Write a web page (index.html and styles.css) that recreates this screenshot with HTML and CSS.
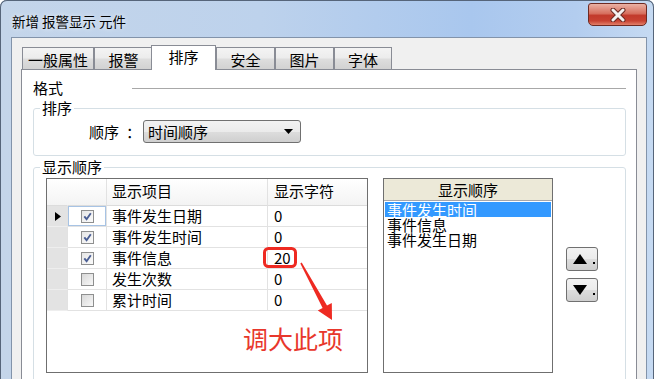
FILE: index.html
```html
<!DOCTYPE html>
<html lang="zh-CN">
<head>
  <meta charset="UTF-8" />
  <title>新增 报警显示 元件</title>
  <link rel="stylesheet" href="styles.css">
</head>
<body>

<div class="window">
  <div class="titlebar">
    <span class="title">新增 报警显示 元件</span>
    <button class="close-btn">
      <svg width="16" height="14" viewBox="0 0 16 14">
        <path d="M3 2 L13 12 M13 2 L3 12" stroke="#6b2a22" stroke-width="5" stroke-linecap="round"/>
        <path d="M3 2 L13 12 M13 2 L3 12" stroke="#f4f1f0" stroke-width="3" stroke-linecap="round"/>
      </svg>
    </button>
  </div>

  <div class="client">
    <div class="tabs">
      <div class="tab tab-1">一般属性</div>
      <div class="tab tab-2">报警</div>
      <div class="tab active">排序</div>
      <div class="tab tab-4">安全</div>
      <div class="tab tab-5">图片</div>
      <div class="tab tab-6">字体</div>
    </div>

    <div class="tab-panel">
      <div class="section-head">
        <span>格式</span>
        <i class="rule"></i>
      </div>

      <fieldset class="group group-sort">
        <legend>排序</legend>
        <div class="field">
          <label>顺序<span class="colon">：</span></label>
          <div class="combo">
            <span>时间顺序</span>
            <svg width="9" height="5" viewBox="0 0 9 5"><polygon points="0,0 9,0 4.5,5" fill="#000"/></svg>
          </div>
        </div>
      </fieldset>

      <fieldset class="group group-order">
        <legend>显示顺序</legend>
        <div class="order-body">

          <div class="grid">
            <div class="grid-row head">
              <div class="cell corner"></div>
              <div class="cell"></div>
              <div class="cell">显示项目</div>
              <div class="cell num">显示字符</div>
            </div>
            <div class="grid-row">
              <div class="cell rowhead"><svg width="6" height="9" viewBox="0 0 6 9"><polygon points="0,0 6,4.5 0,9" fill="#000"/></svg></div>
              <div class="cell chk-cell focused"><span class="chk on"><svg width="11" height="11" viewBox="0 0 11 11"><path d="M2.3 5.4 L4.6 8.2 L8.8 2.3" fill="none" stroke="#4b5f94" stroke-width="1.9"/></svg></span></div>
              <div class="cell">事件发生日期</div>
              <div class="cell num">0</div>
            </div>
            <div class="grid-row">
              <div class="cell rowhead"></div>
              <div class="cell chk-cell"><span class="chk on"><svg width="11" height="11" viewBox="0 0 11 11"><path d="M2.3 5.4 L4.6 8.2 L8.8 2.3" fill="none" stroke="#4b5f94" stroke-width="1.9"/></svg></span></div>
              <div class="cell">事件发生时间</div>
              <div class="cell num">0</div>
            </div>
            <div class="grid-row">
              <div class="cell rowhead"></div>
              <div class="cell chk-cell"><span class="chk on"><svg width="11" height="11" viewBox="0 0 11 11"><path d="M2.3 5.4 L4.6 8.2 L8.8 2.3" fill="none" stroke="#4b5f94" stroke-width="1.9"/></svg></span></div>
              <div class="cell">事件信息</div>
              <div class="cell num">20</div>
            </div>
            <div class="grid-row">
              <div class="cell rowhead"></div>
              <div class="cell chk-cell"><span class="chk"></span></div>
              <div class="cell">发生次数</div>
              <div class="cell num">0</div>
            </div>
            <div class="grid-row">
              <div class="cell rowhead"></div>
              <div class="cell chk-cell"><span class="chk"></span></div>
              <div class="cell">累计时间</div>
              <div class="cell num">0</div>
            </div>
          </div>

          <div class="listbox">
            <div class="list-head">显示顺序</div>
            <ul class="list">
              <li class="selected">事件发生时间</li>
              <li>事件信息</li>
              <li>事件发生日期</li>
            </ul>
          </div>

          <div class="move-btns">
            <button class="move-btn">
              <svg width="30" height="22" viewBox="0 0 30 22"><polygon points="6,16 13,6 20,16" fill="#000"/><rect x="26" y="14" width="2" height="2" fill="#000"/></svg>
            </button>
            <button class="move-btn">
              <svg width="30" height="22" viewBox="0 0 30 22"><polygon points="6,6 20,6 13,16" fill="#000"/><rect x="26" y="14" width="2" height="2" fill="#000"/></svg>
            </button>
          </div>

        </div>
      </fieldset>
    </div>
  </div>

  <!-- red markup drawn on top of the screenshot -->
  <svg class="annot" width="654" height="379" viewBox="0 0 654 379">
    <rect x="264.5" y="248.5" width="31" height="18" rx="4" fill="none" stroke="#ee2a22" stroke-width="3"/>
    <polygon points="301.7,262.6 327,305.6 331.8,303 332,320 317.8,310.6 322.6,308 300.3,263.4" fill="#ee2a22"/>
  </svg>
  <div class="annot-text">调大此项</div>
</div>

</body>
</html>
```

FILE: styles.css
```css
html {
  background: #fff;
}
body {
  margin: 0;
  font-family: "Noto Sans CJK SC", "Liberation Sans", sans-serif;
  font-size: 15px;
  color: #000;
}

.window {
  position: relative;
  width: 654px;
  height: 379px;
  overflow: hidden;
  border-radius: 7px 7px 0 0;
  background: linear-gradient(to right, #c4d5ea 0%, #bdd2ec 40%, #a9c7ee 72%, #b3cdef 88%, #c6daf2 100%);
  box-shadow: inset 0 1px 0 #56657a, inset 1px 0 0 #56657a, inset -1px 0 0 #56657a;
}

.titlebar {
  height: 37px;
  display: flex;
  justify-content: space-between;
  align-items: flex-start;
  padding: 0 7px 0 12px;
}
.title {
  margin-top: 13px;
  font-size: 13.5px;
  line-height: 16px;
  text-shadow: 0 0 5px rgba(255, 255, 255, 0.9);
}
.close-btn {
  margin-top: 3px;
  width: 59px;
  height: 23px;
  padding: 0;
  display: flex;
  align-items: center;
  justify-content: center;
  border: 1px solid #6e2a22;
  border-radius: 3px 3px 5px 5px;
  background: linear-gradient(#eab1a4 0%, #d7705f 45%, #c23a2b 55%, #c84232 80%, #e2806a 100%);
}

.client {
  margin: 0 7px 0 11px;
  height: 360px;
  background: #f0f0f0;
  border: 1px solid #8293aa;
  border-bottom: none;
}

/* tab strip */
.tabs {
  display: flex;
  align-items: flex-end;
  height: 24px;
  margin-top: 7px;
  padding-left: 10px;
}
.tab {
  box-sizing: border-box;
  height: 22px;
  padding-top: 2px;
  line-height: 19px;
  text-align: center;
  border: 1px solid #898c95;
  border-bottom: none;
  background: linear-gradient(#f4f4f4 0%, #ececec 48%, #dedede 52%, #d2d2d2 100%);
}
.tab-1 { width: 72px; }
.tab-2 { width: 59px; }
.tab-4 { width: 59px; }
.tab-5 { width: 59px; }
.tab-6 { width: 58px; }
.tab.active {
  position: relative;
  z-index: 1;
  width: 65px;
  height: 25px;
  margin-left: -2px;
  margin-bottom: -1px;
  padding-top: 1px;
  line-height: 20px;
  background: #fff;
}

.tab-panel {
  margin: 0 9px;
  height: 320px;
  padding: 9px 10px 0 11px;
  background: #fff;
  border: 1px solid #898c95;
}

.section-head {
  display: flex;
  align-items: center;
  height: 18px;
  line-height: 18px;
}
.section-head .rule {
  flex: 1;
  height: 1px;
  margin-left: 69px;
  background: #a8a8a8;
}

/* group boxes */
.group {
  margin: 2px 0 0;
  padding: 0;
  min-width: 0;
  border: 1px solid #d5dfe5;
  border-radius: 3px;
}
.group legend {
  margin-left: 6px;
  padding: 0 2px;
  line-height: 18px;
}
.group-sort {
  padding-bottom: 12px;
}
.field {
  display: flex;
  align-items: center;
  margin: 3px 0 0 55px;
}
.field label {
  width: 54px;
}
.field .colon {
  margin-left: 7px;
}
.combo {
  box-sizing: border-box;
  width: 158px;
  height: 23px;
  display: flex;
  align-items: center;
  justify-content: space-between;
  padding: 0 7px 0 4px;
  border: 1px solid #707070;
  border-radius: 3px;
  background: linear-gradient(#f2f2f2 0%, #ebebeb 50%, #dddddd 51%, #cfcfcf 100%);
  line-height: 20px;
}

.group-order {
  height: 260px;
}
.order-body {
  display: flex;
  align-items: flex-start;
  margin: 2px 0 0 12px;
}

/* data grid */
.grid {
  box-sizing: border-box;
  width: 322px;
  height: 195px;
  border: 1px solid #6f6f6f;
  background: #fff;
}
.grid-row {
  display: grid;
  grid-template-columns: 21px 39px 161px 99px;
  height: 21px;
}
.grid-row.head {
  height: 27px;
  background: linear-gradient(#ffffff, #f3f3f3);
}
.cell {
  box-sizing: border-box;
  display: flex;
  align-items: center;
  padding-left: 5px;
  border-right: 1px solid #e2e2e2;
  border-bottom: 1px solid #e2e2e2;
  line-height: 20px;
}
.head .cell {
  padding-bottom: 2px;
  border-bottom-color: #dcdcdc;
}
.head .corner {
  border-right-color: transparent;
}
.cell.num {
  padding-left: 6px;
}
.cell.num:last-child {
  border-right: none;
}
.cell.rowhead {
  padding-left: 8px;
  background: #e3e3e3;
  border-bottom-color: #eeeeee;
}
.chk-cell {
  justify-content: center;
  padding-left: 1px;
}
.chk-cell.focused {
  box-shadow: inset 0 0 0 1px #a7c3e4;
}
.chk {
  box-sizing: border-box;
  display: block;
  width: 13px;
  height: 13px;
  border: 1px solid #8e8f8f;
  background: linear-gradient(135deg, #d8d8d8, #f8f8f8);
}
.chk svg {
  display: block;
}
.chk.on {
  background: linear-gradient(135deg, #e6e6e6, #fbfbfb);
}

/* order list */
.listbox {
  box-sizing: border-box;
  width: 170px;
  height: 195px;
  margin-left: 15px;
  border: 1px solid #6f6f6f;
  background: #fff;
}
.list-head {
  height: 22px;
  box-sizing: border-box;
  line-height: 21px;
  text-align: center;
  background: #ece9d8;
  border-bottom: 1px solid #a7a6aa;
}
.list {
  list-style: none;
  margin: 0;
  padding: 1px 1px 0;
}
.list li {
  height: 15px;
  line-height: 15px;
  padding-left: 2px;
}
.list li.selected {
  background: #3399ff;
  color: #fff;
}

.move-btns {
  display: flex;
  flex-direction: column;
  gap: 7px;
  margin-left: 13px;
  padding-top: 69px;
}
.move-btn {
  width: 32px;
  height: 24px;
  padding: 0;
  border: 1px solid #707070;
  border-radius: 3px;
  background: linear-gradient(#f2f2f2 0%, #ebebeb 50%, #dddddd 51%, #cfcfcf 100%);
}
.move-btn svg {
  display: block;
}

/* red markup over the dialog */
.annot {
  position: absolute;
  left: 0;
  top: 0;
  pointer-events: none;
}
.annot-text {
  position: absolute;
  left: 243px;
  top: 326px;
  font-size: 25px;
  line-height: 25px;
  color: #e8372c;
}
```
